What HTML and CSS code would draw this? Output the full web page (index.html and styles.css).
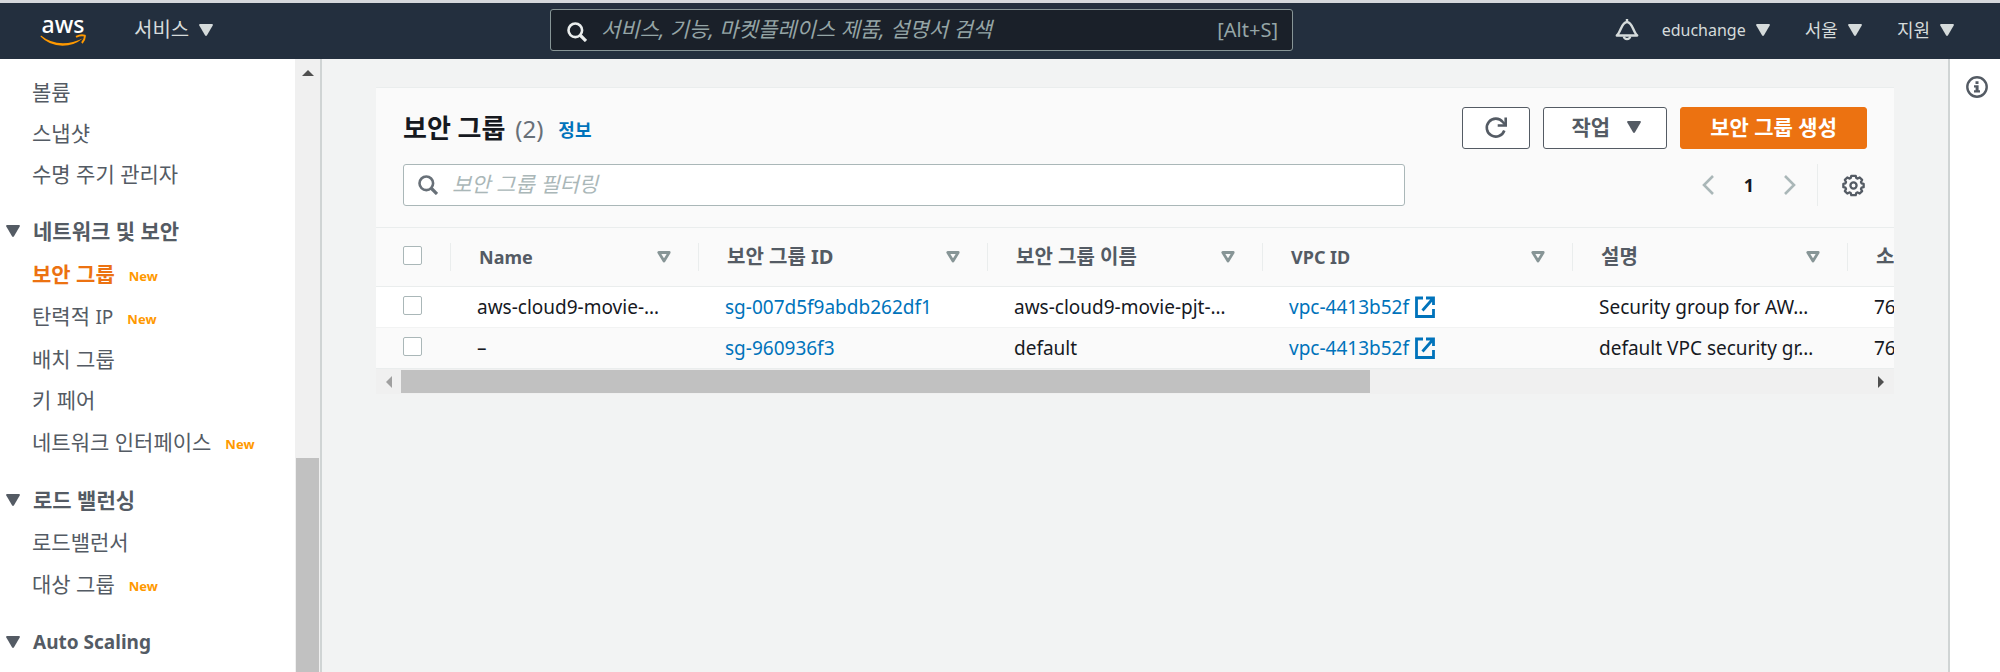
FILE: index.html
```html
<!DOCTYPE html>
<html lang="ko">
<head>
<meta charset="utf-8">
<meta name="viewport" content="width=device-width, initial-scale=1">
<title>보안 그룹</title>
<link rel="stylesheet" href="styles.css">
</head>
<body>
<svg class="sprite" aria-hidden="true">
  <symbol id="caret" viewBox="0 0 14 12"><path d="M1 0h12q1.300 .2.700 1.400L8 11.300q-1 1.200-2 0L.3 1.400Q-.2.200 1 0z" fill="currentColor"/></symbol>
  <symbol id="sort" viewBox="0 0 14 12"><path d="M1.800 1.500h10.400L7 10z" fill="none" stroke="currentColor" stroke-width="2.800" stroke-linejoin="round"/></symbol>
  <symbol id="search" viewBox="0 0 20 20"><circle cx="8.300" cy="8.300" r="6.800" fill="none" stroke="currentColor" stroke-width="2.600"/><path d="M13 13l6 6" stroke="currentColor" stroke-width="3.200"/></symbol>
  <symbol id="external" viewBox="0 0 20 22"><path d="M8 2H1.500v18.500h17V13M11 2h7.500v7M18 2.500L7.500 14.500" fill="none" stroke="currentColor" stroke-width="2.800"/></symbol>
</svg>
<header class="topbar">
  <div class="topbar-start">
    <a class="logo" href="#" aria-label="AWS">
      <span class="logo-text">aws</span>
      <svg class="logo-smile" viewBox="0 0 46 12" aria-hidden="true"><path d="M1 1.500Q10 9 23 9.300 33 9.300 43 4.200 34 11.800 22.500 11.800 9 11.500 .5 2.500z" fill="#ff9900"/><path d="M36 2.800q5-2.300 8.800-1.100.4 3.600-2.900 7.300" fill="none" stroke="#ff9900" stroke-width="1.900"/></svg>
    </a>
    <button class="top-link services">서비스 <svg class="caret"><use href="#caret"/></svg></button>
  </div>
  <label class="top-search">
    <svg class="top-search-icon" aria-hidden="true"><use href="#search"/></svg>
    <input type="search" aria-label="검색" placeholder="서비스, 기능, 마켓플레이스 제품, 설명서 검색">
    <span class="shortcut">[Alt+S]</span>
  </label>
  <div class="topbar-end">
    <button class="bell" aria-label="알림"><svg viewBox="0 0 24 24"><path d="M12 1v3M1.800 17.500C6 14 6.500 4 12 4s6 10 10.200 13.500z" fill="none" stroke="currentColor" stroke-width="2.400" stroke-linejoin="round"/><path d="M8.700 18.500a3.400 3.400 0 0 0 6.600 0" fill="none" stroke="currentColor" stroke-width="2.200"/></svg></button>
    <button class="top-link account">educhange <svg class="caret"><use href="#caret"/></svg></button>
    <button class="top-link">서울 <svg class="caret"><use href="#caret"/></svg></button>
    <button class="top-link">지원 <svg class="caret"><use href="#caret"/></svg></button>
  </div>
</header>
<div class="shell">
  <aside class="sidebar">
    <nav class="nav">
      <ul>
        <li><a href="#">볼륨</a></li>
        <li><a href="#">스냅샷</a></li>
        <li><a href="#">수명 주기 관리자</a></li>
      </ul>
      <button class="nav-head"><svg class="caret"><use href="#caret"/></svg>네트워크 및 보안</button>
      <ul>
        <li class="has-badge"><a class="current" href="#" aria-current="page">보안 그룹</a><span class="badge">New</span></li>
        <li class="has-badge"><a href="#">탄력적 <span class="latin">IP</span></a><span class="badge">New</span></li>
        <li><a href="#">배치 그룹</a></li>
        <li><a href="#">키 페어</a></li>
        <li class="has-badge"><a href="#">네트워크 인터페이스</a><span class="badge">New</span></li>
      </ul>
      <button class="nav-head"><svg class="caret"><use href="#caret"/></svg>로드 밸런싱</button>
      <ul>
        <li><a href="#">로드밸런서</a></li>
        <li class="has-badge"><a href="#">대상 그룹</a><span class="badge">New</span></li>
      </ul>
      <button class="nav-head"><svg class="caret"><use href="#caret"/></svg><span class="latin">Auto Scaling</span></button>
    </nav>
    <div class="vscroll" aria-hidden="true">
      <div class="vscroll-space"><svg viewBox="0 0 12 6"><path d="M0 6l6-6 6 6z" fill="#505050"/></svg></div>
      <div class="vscroll-thumb"></div>
    </div>
  </aside>
  <main class="content">
    <section class="panel">
      <div class="panel-top">
        <div class="title-row">
          <h1>보안 그룹 <span class="count">(2)</span></h1>
          <a class="info-link" href="#">정보</a>
          <div class="actions">
            <button class="btn btn-icon" aria-label="새로 고침"><svg viewBox="0 0 24 24"><path d="M20.300 14.500A9 9 0 1 1 18.800 6L21 8.500" fill="none" stroke="currentColor" stroke-width="2.600"/><path d="M21.700 1.500v8h-8" fill="none" stroke="currentColor" stroke-width="2.600"/></svg></button>
            <button class="btn btn-menu">작업 <svg class="caret"><use href="#caret"/></svg></button>
            <button class="btn btn-primary">보안 그룹 생성</button>
          </div>
        </div>
        <div class="filter-row">
          <label class="filter">
            <svg class="filter-icon" aria-hidden="true"><use href="#search"/></svg>
            <input type="search" aria-label="보안 그룹 필터링" placeholder="보안 그룹 필터링">
          </label>
          <div class="pager">
            <button aria-label="이전"><svg viewBox="0 0 12 20"><path d="M11 1L2 10l9 9" fill="none" stroke="currentColor" stroke-width="2.600"/></svg></button>
            <button class="page">1</button>
            <button aria-label="다음"><svg viewBox="0 0 12 20"><path d="M1 1l9 9-9 9" fill="none" stroke="currentColor" stroke-width="2.600"/></svg></button>
          </div>
          <button class="gear" aria-label="설정"><svg viewBox="0 0 24 24"><path d="M9.700 2h4.600l.6 2.200 1.400.6 2.200-1.200 2.500 2.500-1.200 2.200.6 1.400 2.200.6v3.400l-2.200.6-.6 1.400 1.200 2.200-2.500 2.500-2.200-1.200-1.400.6-.6 2.200H9.700l-.6-2.200-1.400-.6-2.200 1.200L3 17.900l1.200-2.200-.6-1.400-2.200-.6v-3.400l2.200-.6.6-1.400L3 6.100l2.500-2.500 2.200 1.200 1.400-.6z" fill="none" stroke="currentColor" stroke-width="2.400" stroke-linejoin="round"/><circle cx="12" cy="12" r="3.200" fill="none" stroke="currentColor" stroke-width="2.400"/></svg></button>
        </div>
      </div>
      <div class="table-wrap">
        <table>
          <colgroup><col class="c-check"><col class="c-tag"><col class="c-id"><col class="c-name"><col class="c-vpc"><col class="c-desc"><col class="c-owner"></colgroup>
          <thead>
            <tr>
              <th class="check"><div class="th"><input type="checkbox" aria-label="모두 선택"></div></th>
              <th><div class="th latin">Name<svg class="sort"><use href="#sort"/></svg></div></th>
              <th><div class="th">보안 그룹 ID<svg class="sort"><use href="#sort"/></svg></div></th>
              <th><div class="th">보안 그룹 이름<svg class="sort"><use href="#sort"/></svg></div></th>
              <th><div class="th latin">VPC ID<svg class="sort"><use href="#sort"/></svg></div></th>
              <th><div class="th">설명<svg class="sort"><use href="#sort"/></svg></div></th>
              <th><div class="th">소</div></th>
            </tr>
          </thead>
          <tbody>
            <tr>
              <td class="check"><input type="checkbox" aria-label="sg-007d5f9abdb262df1 선택"></td>
              <td>aws-cloud9-movie-…</td>
              <td><a href="#">sg-007d5f9abdb262df1</a></td>
              <td>aws-cloud9-movie-pjt-…</td>
              <td><a class="ext" href="#">vpc-4413b52f<svg><use href="#external"/></svg></a></td>
              <td>Security group for AW…</td>
              <td>76</td>
            </tr>
            <tr>
              <td class="check"><input type="checkbox" aria-label="sg-960936f3 선택"></td>
              <td>–</td>
              <td><a href="#">sg-960936f3</a></td>
              <td>default</td>
              <td><a class="ext" href="#">vpc-4413b52f<svg><use href="#external"/></svg></a></td>
              <td>default VPC security gr…</td>
              <td>76</td>
            </tr>
          </tbody>
        </table>
      </div>
      <div class="hscroll" aria-hidden="true">
        <svg viewBox="0 0 6 12"><path d="M6 0v12L0 6z" fill="#a0a0a0"/></svg>
        <div class="hscroll-track"><div class="hscroll-thumb"></div></div>
        <svg viewBox="0 0 6 12"><path d="M0 0v12l6-6z" fill="#505050"/></svg>
      </div>
    </section>
  </main>
  <aside class="help">
    <button aria-label="정보 패널"><svg viewBox="0 0 22 22"><circle cx="11" cy="11" r="9.700" fill="none" stroke="currentColor" stroke-width="2.400"/><path d="M9.500 5.200h3V8h-3zM8 9.300h4.600v4.900H14v2.200H8v-2.200h1.600v-2.700H8z" fill="currentColor"/></svg></button>
  </aside>
</div>
</body>
</html>
```

FILE: styles.css
```css
* { box-sizing: border-box; }
body {
  margin: 0;
  min-height: 100vh;
  display: flex;
  flex-direction: column;
  background: #f2f3f3;
  color: #16191f;
  font: 18px/24px "Noto Sans", "Noto Sans CJK KR", sans-serif;
}
.sprite { position: absolute; width: 0; height: 0; }
button, input { font: inherit; color: inherit; }
button { padding: 0; border: 0; background: none; cursor: pointer; }
a { color: #0073bb; text-decoration: none; }
svg { display: block; flex: none; }
ul { margin: 0; padding: 0; list-style: none; }
input[type="search"] {
  flex: 1;
  min-width: 0;
  padding: 0 0 2px;
  border: 0;
  outline: 0;
  background: none;
  appearance: none;
  font-size: 21px;
}
input::placeholder { font-style: italic; opacity: 1; }
.caret { width: 14px; height: 12px; }

.topbar {
  display: flex;
  align-items: center;
  height: 59px;
  padding: 0 46px 2px 40px;
  border-top: 3px solid #d5d8dc;
  background: #232f3e;
  color: #d5dbdb;
}
.topbar-start { display: flex; align-items: center; width: 510px; gap: 48px; }
.logo { display: flex; flex-direction: column; align-items: center; width: 46px; color: #fff; }
.logo-text { font-size: 23px; line-height: 19px; font-weight: 500; }
.logo-smile { width: 46px; height: 12px; }
.top-link { display: flex; align-items: center; gap: 10px; font-size: 18px; }
.services { font-size: 20px; }
.account { font-size: 16px; }
.top-search {
  display: flex;
  align-items: center;
  flex: 0 1 743px;
  height: 42px;
  padding: 0 14px 0 16px;
  border: 1px solid #879596;
  border-radius: 3px;
  background: #1a2029;
  color: #95a5a6;
}
.top-search-icon { width: 20px; height: 20px; margin: 4px 14px 0 0; color: #eaeded; }
.top-search input::placeholder { color: #95a5a6; }
.shortcut { font-size: 20px; }
.topbar-end { display: flex; align-items: center; gap: 35px; margin-left: auto; }
.bell { margin-right: -12px; }
.bell svg { width: 24px; height: 24px; }

.shell { display: flex; flex: 1; }
.sidebar { display: flex; flex: 0 0 322px; border-right: 2px solid #d0d4d4; background: #fff; }
.nav { flex: 1; padding-top: 12px; color: #545b64; font-size: 21px; }
.nav li { display: flex; align-items: center; height: 41px; padding-left: 32px; }
.nav li.has-badge { height: 43px; }
.nav li a { color: #545b64; }
.nav li a.current { color: #ec7211; font-weight: 700; }
.nav .latin { font-size: 19px; }
.badge { margin: 4px 0 0 14px; color: #ff9900; font-size: 13px; font-weight: 700; }
.nav-head { display: flex; align-items: center; gap: 13px; height: 43px; margin-top: 15px; padding-left: 6px; font-weight: 700; }
.vscroll { display: flex; flex-direction: column; width: 25px; padding: 0 1px; background: #f0f0f0; }
.vscroll-space { flex: 377; padding: 11px 6px; }
.vscroll-space svg { width: 12px; height: 6px; }
.vscroll-thumb { flex: 214; background: #c1c1c1; }

.content { flex: 1; min-width: 0; padding: 28px 54px 0; }
.panel { border-top: 1px solid #eaeded; background: #fafafa; }
.panel-top { padding: 19px 27px 21px; }
.title-row { display: flex; align-items: center; }
h1 { margin: 0; font-size: 26px; line-height: 36px; font-weight: 700; }
.count { margin-left: 3px; color: #687078; font-size: 24px; font-weight: 400; }
.info-link { margin: 4px 0 0 15px; font-size: 18px; font-weight: 700; }
.actions { display: flex; gap: 13px; margin-left: auto; }
.btn {
  display: flex;
  align-items: center;
  justify-content: center;
  height: 42px;
  padding: 0 29px 2px;
  border: 1px solid #545b64;
  border-radius: 3px;
  background: #fff;
  color: #545b64;
  font-size: 21px;
  font-weight: 700;
}
.btn-icon { padding: 0 21px; }
.btn-icon svg { width: 24px; height: 24px; }
.btn-menu { gap: 17px; padding: 0 25px 2px 28px; }
.btn-primary { border-color: #ec7211; background: #ec7211; color: #fff; }
.filter-row { display: flex; align-items: center; margin-top: 15px; }
.filter {
  display: flex;
  align-items: center;
  flex: 0 1 1002px;
  height: 42px;
  padding: 0 14px;
  border: 1px solid #aab7b8;
  border-radius: 3px;
  background: #fff;
}
.filter-icon { width: 20px; height: 20px; margin-right: 14px; color: #687078; }
.filter input::placeholder { color: #aab7b8; }
.pager { display: flex; align-items: center; gap: 30px; margin-left: auto; padding-right: 21px; color: #aab7b8; }
.pager svg { width: 12px; height: 20px; }
.page { color: #16191f; font-weight: 700; }
.gear { height: 42px; padding: 0 2px 0 24px; border-left: 1px solid #eaeded; color: #545b64; }
.gear svg { width: 23px; height: 23px; }

.table-wrap { overflow: hidden; }
table { width: 1797px; table-layout: fixed; border-collapse: separate; border-spacing: 0; }
.c-check { width: 75px; }
.c-tag { width: 248px; }
.c-id { width: 289px; }
.c-name { width: 275px; }
.c-vpc { width: 310px; }
.c-desc { width: 275px; }
th { height: 60px; padding: 0; border-top: 1px solid #eaeded; border-bottom: 1px solid #eaeded; color: #545b64; font-size: 20px; text-align: left; }
.th { display: flex; align-items: center; height: 28px; padding: 0 27px 0 28px; border-right: 1px solid #eaeded; }
.th.latin { font-size: 18px; }
.check .th, td.check { padding-left: 27px; }
.sort { width: 14px; height: 12px; margin-left: auto; color: #879596; }
td { height: 41px; padding: 0 0 0 26px; background: #fff; border-bottom: 1px solid #f2f3f3; font-size: 19px; white-space: nowrap; }
tbody tr:last-child td { background: #fafafa; border-bottom-color: #eaeded; }
input[type="checkbox"] {
  display: block;
  width: 19px;
  height: 19px;
  margin: 0 0 4px;
  appearance: none;
  border: 1px solid #aab7b8;
  border-radius: 2px;
  background: #fff;
}
.ext { display: flex; align-items: center; gap: 6px; }
.ext svg { width: 20px; height: 22px; }
.hscroll { display: flex; align-items: center; height: 25px; padding: 0 10px; background: #f0f0f0; }
.hscroll svg { width: 6px; height: 12px; }
.hscroll-track { flex: 1; margin: 0 9px; }
.hscroll-thumb { width: 66%; height: 23px; background: #c1c1c1; }

.help { flex: 0 0 52px; border-left: 2px solid #d0d4d4; background: #fff; color: #545b64; }
.help button { margin: 17px 0 0 16px; }
.help svg { width: 22px; height: 22px; }
```
